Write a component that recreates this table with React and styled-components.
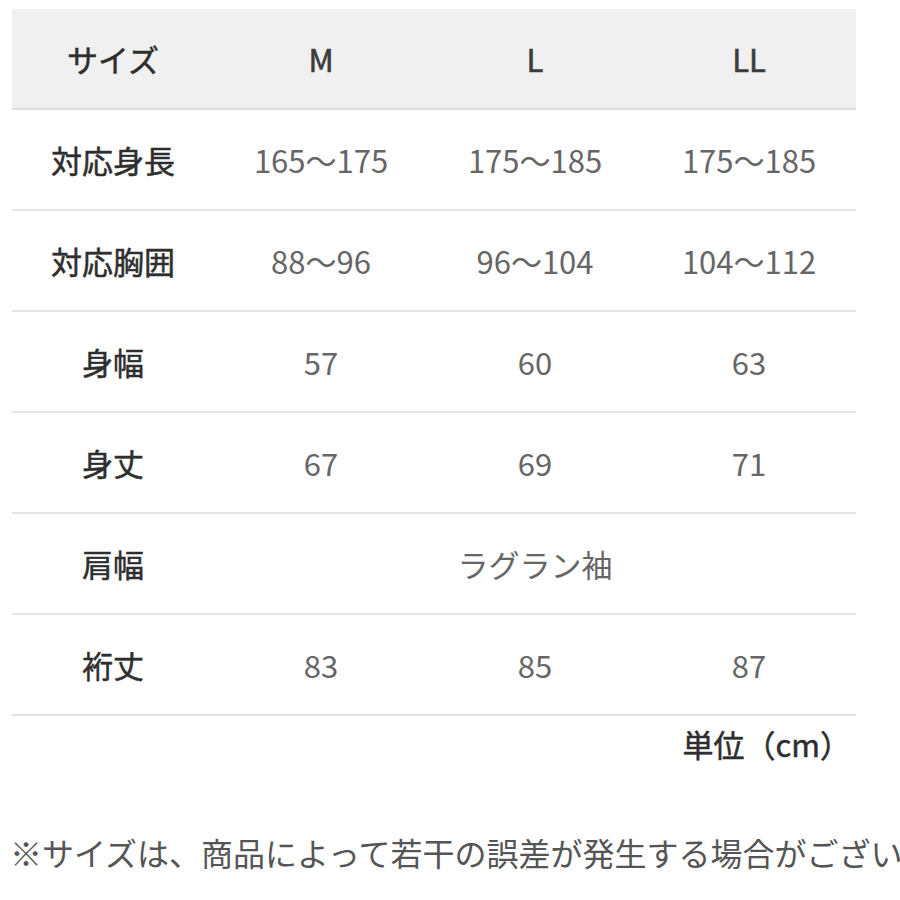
import React from "react";
import styled, { createGlobalStyle } from "styled-components";

const Global = createGlobalStyle`
  html, body { margin: 0; padding: 0; background: #fff; }
  body { font-family: "Noto Sans CJK JP", "Noto Sans", sans-serif; }
`;

const Page = styled.div`
  width: 900px;
  height: 900px;
  overflow: hidden;
  padding: 9px 0 0 12px;
  box-sizing: border-box;
`;

const Table = styled.table`
  width: 844px;
  border-collapse: collapse;
  table-layout: fixed;
  font-size: 31px;
`;

const HeadRow = styled.tr`
  background: #f0f0f0;
`;

const Row = styled.tr`
  border-bottom: 2px solid #e4e4e4;
  &:first-child { border-bottom-color: #dedede; }
`;

const Cell = styled.td`
  height: 99px;
  padding: 0;
  text-align: center;
  vertical-align: middle;
  color: ${(p) => (p.$label ? "#2e2e2e" : p.$head ? "#3c3c3c" : "#666")};
  font-weight: 400;
  white-space: nowrap;
  -webkit-text-stroke: ${(p) =>
    p.$label ? "0.5px #2e2e2e" : p.$head ? "0.6px #3c3c3c" : "0"};
`;

const Unit = styled.div`
  width: 839px;
  text-align: right;
  font-size: 31px;
  color: #2e2e2e;
  font-weight: 400;
  -webkit-text-stroke: 0.5px #2e2e2e;
  margin-top: 8px;
  line-height: 40px;
`;

const Note = styled.div`
  margin-top: 68px;
  font-size: 32px;
  color: #555;
  white-space: nowrap;
  line-height: 40px;
  margin-left: -2px;
`;

const rows = [
  ["対応身長", "165～175", "175～185", "175～185"],
  ["対応胸囲", "88～96", "96～104", "104～112"],
  ["身幅", "57", "60", "63"],
  ["身丈", "67", "69", "71"],
  ["肩幅", "ラグラン袖"],
  ["裄丈", "83", "85", "87"],
];

export default function App() {
  return (
    <>
      <Global />
      <Page>
        <Table>
          <colgroup>
            <col style={{ width: 202 }} />
            <col style={{ width: 214 }} />
            <col style={{ width: 214 }} />
            <col style={{ width: 214 }} />
          </colgroup>
          <tbody>
            <Row as={HeadRow}>
              <Cell $label>サイズ</Cell>
              <Cell $head>M</Cell>
              <Cell $head>L</Cell>
              <Cell $head>LL</Cell>
            </Row>
            {rows.map((r) => (
              <Row key={r[0]}>
                <Cell $label>{r[0]}</Cell>
                {r.length === 2 ? (
                  <Cell colSpan={3}>{r[1]}</Cell>
                ) : (
                  r.slice(1).map((v, i) => <Cell key={i}>{v}</Cell>)
                )}
              </Row>
            ))}
          </tbody>
        </Table>
        <Unit>単位（cm）</Unit>
        <Note>※サイズは、商品によって若干の誤差が発生する場合がございます。</Note>
      </Page>
    </>
  );
}
